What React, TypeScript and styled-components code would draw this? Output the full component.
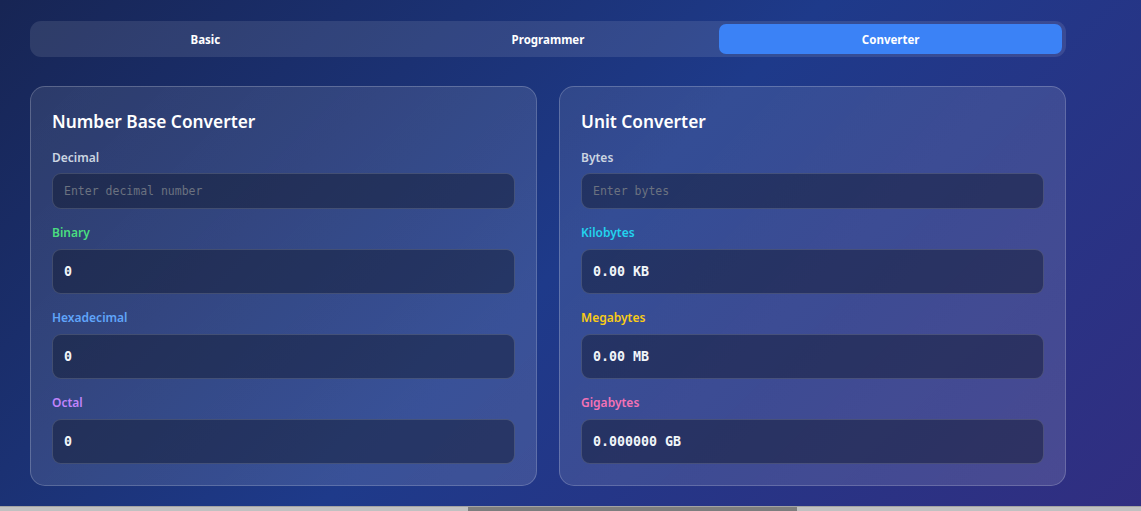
import React from "react";
import styled, { createGlobalStyle } from "styled-components";

const GlobalStyle = createGlobalStyle`
  html, body { margin: 0; padding: 0; height: 100%; overflow: hidden; }
  body { font-family: "Noto Sans", "Open Sans", sans-serif; }
  #root { height: 100%; }
`;

const Page = styled.div`
  height: 511px;
  display: flex;
  flex-direction: column;
  background: linear-gradient(135deg, #172554 0%, #1e3a8a 50%, #312e81 100%);
`;

const Main = styled.main`
  flex: 1;
  padding: 21px 0 0 30px;
`;

const Container = styled.div`
  width: 1036px;
  display: flex;
  flex-direction: column;
  gap: 29px;
`;

const TabBar = styled.div`
  display: grid;
  grid-template-columns: repeat(3, 1fr);
  padding: 3px 4px;
  height: 36px;
  box-sizing: border-box;
  border-radius: 11px;
  background: rgba(255, 255, 255, 0.1);
`;

const Tab = styled.button<{ $active?: boolean }>`
  border: none;
  border-radius: 7px;
  font-family: "Noto Sans", sans-serif;
  font-size: 11.5px;
  font-weight: 700;
  color: #ffffff;
  background: ${(p) => (p.$active ? "#3b82f6" : "transparent")};
  cursor: pointer;
`;

const Cards = styled.div`
  display: grid;
  grid-template-columns: 1fr 1fr;
  gap: 22px;
`;

const Card = styled.section`
  height: 400px;
  box-sizing: border-box;
  border: 1px solid rgba(255, 255, 255, 0.2);
  border-radius: 15px;
  background: linear-gradient(135deg, rgba(255,255,255,0.09), rgba(255,255,255,0.13));
  padding: 22px 21px 22px 21px;
  display: flex;
  flex-direction: column;
`;

const Title = styled.h2`
  margin: 0 0 15px 0;
  font-size: 17.3px;
  line-height: 26px;
  font-weight: 600;
  color: #ffffff;
`;

const Fields = styled.div`
  display: flex;
  flex-direction: column;
  gap: 16px;
`;

const Field = styled.div<{ $tight?: boolean }>`
  display: flex;
  flex-direction: column;
  gap: ${(p) => (p.$tight ? "7px" : "8px")};
`;

const Label = styled.label<{ $color: string }>`
  font-size: 12px;
  line-height: 16px;
  font-weight: 600;
  color: ${(p) => p.$color};
`;

const Input = styled.input`
  height: 36px;
  box-sizing: border-box;
  border: 1px solid rgba(255, 255, 255, 0.15);
  border-radius: 9px;
  background: rgba(15, 23, 42, 0.45);
  padding: 0 11px;
  font-family: "DejaVu Sans Mono", monospace;
  font-size: 11.5px;
  color: #ffffff;
  outline: none;
  &::placeholder { color: #6b7280; }
`;

const Output = styled.div`
  height: 45px;
  box-sizing: border-box;
  border: 1px solid rgba(255, 255, 255, 0.15);
  border-radius: 9px;
  background: rgba(15, 23, 42, 0.45);
  padding: 0 11px;
  display: flex;
  align-items: center;
  font-family: "DejaVu Sans Mono", monospace;
  font-size: 13.3px;
  font-weight: 700;
  color: #f1f5f9;
`;

const ScrollTrack = styled.div`
  height: 4px;
  background: #c1c1c1;
  border-top: 1px solid #a3a3a3;
  display: flex;
`;

const ScrollThumb = styled.div`
  margin-left: 468px;
  width: 329px;
  background: #7e7e7e;
`;

type Row = { label: string; color: string; value?: string; placeholder?: string };

const ConverterCard = ({ title, rows }: { title: string; rows: Row[] }) => (
  <Card>
    <Title>{title}</Title>
    <Fields>
      {rows.map((r) => (
        <Field key={r.label} $tight={!!r.placeholder}>
          <Label $color={r.color}>{r.label}</Label>
          {r.placeholder ? <Input placeholder={r.placeholder} /> : <Output>{r.value}</Output>}
        </Field>
      ))}
    </Fields>
  </Card>
);

export default function App() {
  return (
    <Page>
      <GlobalStyle />
      <Main>
        <Container>
          <TabBar>
            <Tab>Basic</Tab>
            <Tab>Programmer</Tab>
            <Tab $active>Converter</Tab>
          </TabBar>
          <Cards>
            <ConverterCard
              title="Number Base Converter"
              rows={[
                { label: "Decimal", color: "#cbd5e1", placeholder: "Enter decimal number" },
                { label: "Binary", color: "#4ade80", value: "0" },
                { label: "Hexadecimal", color: "#60a5fa", value: "0" },
                { label: "Octal", color: "#c084fc", value: "0" },
              ]}
            />
            <ConverterCard
              title="Unit Converter"
              rows={[
                { label: "Bytes", color: "#cbd5e1", placeholder: "Enter bytes" },
                { label: "Kilobytes", color: "#22d3ee", value: "0.00 KB" },
                { label: "Megabytes", color: "#facc15", value: "0.00 MB" },
                { label: "Gigabytes", color: "#f472b6", value: "0.000000 GB" },
              ]}
            />
          </Cards>
        </Container>
      </Main>
      <ScrollTrack>
        <ScrollThumb />
      </ScrollTrack>
    </Page>
  );
}
